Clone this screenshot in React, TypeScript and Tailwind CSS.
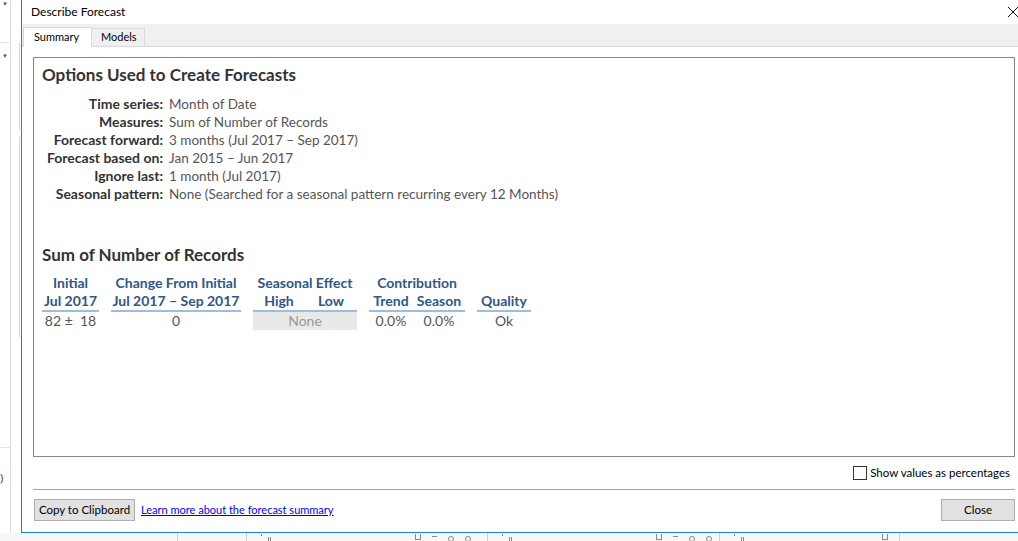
import React from "react";

const ui = "font-['Lato','Open_Sans',sans-serif]";

const options: [string, string][] = [
  ["Time series:", "Month of Date"],
  ["Measures:", "Sum of Number of Records"],
  ["Forecast forward:", "3 months (Jul 2017 – Sep 2017)"],
  ["Forecast based on:", "Jan 2015 – Jun 2017"],
  ["Ignore last:", "1 month (Jul 2017)"],
  ["Seasonal pattern:", "None (Searched for a seasonal pattern recurring every 12 Months)"],
];

function Head({ children }: { children: React.ReactNode }) {
  return <div className="h-[18px] leading-[18px] font-bold text-[#2f5783]">{children}</div>;
}

function LeftStrip() {
  return (
    <div className="relative flex w-[21px] shrink-0">
      <div className="flex w-[11px] flex-col border-r border-[#dcdcdc]">
        <div className="h-[43px] border-b border-[#e3e3e3] pl-[2px] pt-[1px] text-[6px] leading-none text-[#555]">▼</div>
        <div className="pl-[2px] pt-[10px] text-[6px] leading-none text-[#555]">▼</div>
        <div className="mt-auto h-[86px] border-t border-[#e3e3e3] pt-[24px] text-[11px] leading-none text-[#444]">)</div>
      </div>
      <div className="flex flex-1 flex-col items-end pt-[43px]">
        <div className="h-[87px] w-[2px] border-l border-[#d6d6d6]" />
        <div className="mt-[7px] h-[200px] w-[2px] border-l border-[#d6d6d6]" />
      </div>
    </div>
  );
}

function Marks({ set }: { set: "a" | "b" }) {
  if (set === "a") {
    return (
      <div className="flex items-start gap-[6px] pt-[1px]">
        <div className="h-[2px] w-px bg-[#888]" />
        <div className="mt-[3px] h-[5px] w-[3px] border-x border-[#888]" />
      </div>
    );
  }
  return (
    <div className="flex items-start gap-[11px] pt-[1px]">
      <div className="h-[6px] w-[6px] border-x border-b border-[#888]" />
      <div className="mt-[2px] h-px w-[5px] bg-[#888]" />
      <div className="mt-[2px] h-[6px] w-[6px] rounded-full border border-[#888]" />
      <div className="mt-[2px] h-[6px] w-[6px] rounded-full border border-[#888]" />
    </div>
  );
}

function BottomStrip() {
  return (
    <div className="flex h-[8px] items-stretch overflow-hidden bg-[#f7f7f7]">
      <div className="w-[178px] shrink-0 border-r border-[#cfcfcf]" />
      <div className="w-[69px] shrink-0 border-r border-[#cfcfcf]" />
      <div className="w-[168px] shrink-0 pl-[14px]"><Marks set="a" /></div>
      <div className="w-[73px] shrink-0 border-r border-[#cfcfcf]"><Marks set="b" /></div>
      <div className="w-[168px] shrink-0 pl-[14px]"><Marks set="a" /></div>
      <div className="w-[64px] shrink-0 border-r border-[#cfcfcf]"><Marks set="b" /></div>
      <div className="w-[160px] shrink-0 pl-[14px]"><Marks set="a" /></div>
      <div className="w-[20px] shrink-0 border-r border-[#cfcfcf] pl-[2px] pt-[1px]">
        <div className="h-[6px] w-[6px] border-x border-b border-[#888]" />
      </div>
    </div>
  );
}

export default function App() {
  return (
    <div className="flex h-[541px] w-[1018px] flex-col overflow-hidden bg-white">
      <div className="flex h-[533px]">
        <LeftStrip />
        <div className={`flex w-[1015px] shrink-0 flex-col border-b border-l border-[#1883d7] bg-white text-[12px] text-black ${ui}`}>
          <div className="flex h-[24px] items-center">
            <span className="flex-1 pl-[9px]">Describe Forecast</span>
            <div className="flex h-full w-[46px] items-center justify-center">
              <svg width="10" height="10" viewBox="0 0 10 10" stroke="#111" strokeWidth="1">
                <path d="M0 0L10 10M10 0L0 10" />
              </svg>
            </div>
          </div>

          <div className="flex h-[23px] items-end border-b border-[#d9d9d9] bg-[#f0f0f0] pl-[1px]">
            <div className="-mb-px flex h-[20px] w-[69px] items-center border-x border-t border-[#d9d9d9] bg-white pl-[10px] text-[11px]">
              Summary
            </div>
            <div className="flex h-[18px] w-[53px] items-center border border-b-0 border-l-0 border-[#d9d9d9] pl-[9px] text-[11px]">
              Models
            </div>
          </div>

          <div className="flex flex-1 flex-col pl-[11px] pt-[10px]">
            <div className="h-[400px] w-[982px] border border-[#828790] px-2 pt-[6px]">
              <h2 className="h-[22px] text-[17px] leading-[22px] font-bold text-[#333]">Options Used to Create Forecasts</h2>
              <div className="mt-[9px] grid grid-cols-[121px_1fr] gap-x-[6px] leading-[18px]">
                {options.map(([k, v]) => (
                  <React.Fragment key={k}>
                    <div className="text-right text-[14px] font-bold text-[#333]">{k}</div>
                    <div className="text-[13.5px] text-[#555]">{v}</div>
                  </React.Fragment>
                ))}
              </div>

              <h2 className="mt-[41px] h-[22px] text-[17px] leading-[22px] font-bold text-[#333]">Sum of Number of Records</h2>
              <div className="mt-[8px] flex gap-3 text-center text-[14px] leading-[18px] text-[#555]">
                <div className="w-[57px]">
                  <Head>Initial</Head>
                  <div className="border-b-2 border-[#9fbcdd]"><Head>Jul 2017</Head></div>
                  <div className="whitespace-pre">82 ±  18</div>
                </div>
                <div className="w-[130px]">
                  <Head>Change From Initial</Head>
                  <div className="border-b-2 border-[#9fbcdd]"><Head>Jul 2017 – Sep 2017</Head></div>
                  <div>0</div>
                </div>
                <div className="w-[104px]">
                  <Head>Seasonal Effect</Head>
                  <div className="grid grid-cols-2 border-b-2 border-[#9fbcdd]">
                    <Head>High</Head>
                    <Head>Low</Head>
                  </div>
                  <div className="bg-[#e9e9e9] text-[#999]">None</div>
                </div>
                <div className="w-[96px]">
                  <Head>Contribution</Head>
                  <div className="grid grid-cols-[44px_1fr] border-b-2 border-[#9fbcdd]">
                    <Head>Trend</Head>
                    <Head>Season</Head>
                  </div>
                  <div className="grid grid-cols-[44px_1fr]">
                    <div>0.0%</div>
                    <div>0.0%</div>
                  </div>
                </div>
                <div className="w-[54px]">
                  <div className="h-[18px]" />
                  <div className="border-b-2 border-[#9fbcdd]"><Head>Quality</Head></div>
                  <div>Ok</div>
                </div>
              </div>
            </div>

            <div className="flex h-[32px] w-[982px] items-center justify-end pr-[5px] text-[11.5px]">
              <div className="mr-[3px] h-[14px] w-[14px] border border-[#333] bg-white" />
              <span>Show values as percentages</span>
            </div>
            <div className="w-[982px] border-t border-[#a0a0a0]" />

            <div className="flex w-[982px] items-center pt-[9px] text-[11px]">
              <button className="ml-px h-[22px] w-[101px] whitespace-nowrap border border-[#adadad] bg-[#e1e1e1] text-[11.5px]">Copy to Clipboard</button>
              <a className="ml-[6px] text-[#0000ee] underline">Learn more about the forecast summary</a>
              <button className="ml-auto h-[22px] w-[74px] border border-[#adadad] bg-[#e1e1e1] text-[11.5px]">Close</button>
            </div>
          </div>
        </div>
      </div>
      <BottomStrip />
    </div>
  );
}
